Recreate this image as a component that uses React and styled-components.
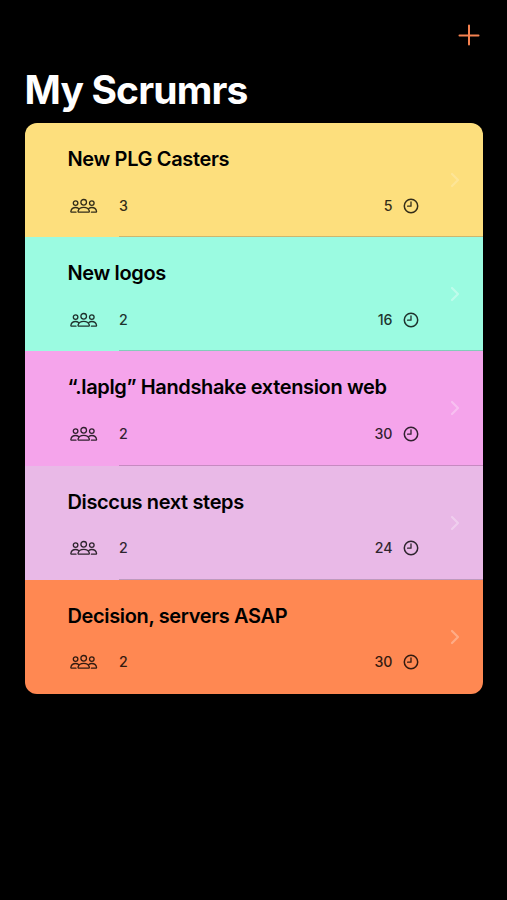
import React from 'react'
import { styled, createGlobalStyle } from 'styled-components'

const GlobalStyle = createGlobalStyle`
  * {
    box-sizing: border-box;
  }
  body {
    margin: 0;
    background-color: #000;
    font-family: Inter, 'Liberation Sans', sans-serif;
  }
`

const Screen = styled.div`
  width: 507px;
  height: 900px;
  padding: 24px 24px 0 24.5px;
  background-color: #000;
  overflow: hidden;
`

const Toolbar = styled.header`
  display: flex;
  justify-content: flex-end;
  height: 42px;
  padding-right: 3px;
`

const AddButton = styled.button`
  all: unset;
  width: 22px;
  height: 22px;
  cursor: pointer;
  svg {
    display: block;
  }
`

const Heading = styled.h1`
  margin: 0;
  height: 57px;
  line-height: 48px;
  color: #fff;
  font-size: 39px;
  font-weight: 700;
  letter-spacing: -0.85px;
  white-space: nowrap;
`

const List = styled.ul`
  margin: 0;
  padding: 0;
  list-style: none;
  border-radius: 12px;
  overflow: hidden;
`

const Row = styled.li`
  display: flex;
  align-items: center;
  height: 114.2px;
  padding: 0 23px 0 43px;
  background-color: ${({ $color }) => $color};
  background-image: ${({ $last }) => $last ? 'none' : 'linear-gradient(rgba(60, 60, 67, 0.25), rgba(60, 60, 67, 0.25))'};
  background-size: calc(100% - 94px) 1px;
  background-position: right bottom;
  background-repeat: no-repeat;
`

const Content = styled.div`
  width: 351px;
  height: 100%;
  padding-top: 23px;
`

const Title = styled.h2`
  margin: 0;
  height: 46.5px;
  line-height: 26px;
  color: #000;
  font-size: 20px;
  font-weight: 600;
  letter-spacing: -0.36px;
  white-space: nowrap;
`

const Meta = styled.div`
  display: flex;
  align-items: center;
  justify-content: space-between;
  height: 26px;
  padding-left: 2px;
  color: #000;
  opacity: 0.8;
  font-size: 14.2px;
  font-weight: 500;
  line-height: 18px;
`

const Attendees = styled.div`
  display: flex;
  align-items: center;
  gap: 21.5px;
`

const Duration = styled.div`
  display: flex;
  align-items: center;
  gap: 10px;
`

const Arrow = styled.svg`
  display: block;
  margin-left: auto;
  opacity: ${({ $opacity }) => $opacity};
`

const scrums = [
  { title: 'New PLG Casters', people: 3, minutes: 5, color: '#fddf7d', arrow: 0.2 },
  { title: 'New logos', people: 2, minutes: 16, color: '#9bfbe1', arrow: 0.35 },
  { title: '“.laplg” Handshake extension web', people: 2, minutes: 30, color: '#f5a4eb', arrow: 0.3 },
  { title: 'Disccus next steps', people: 2, minutes: 24, color: '#e9b9e7', arrow: 0.3 },
  { title: 'Decision, servers ASAP', people: 2, minutes: 30, color: '#ff8852', arrow: 0.3 },
]

const PlusIcon = () => (
  <svg width="22" height="22" viewBox="0 0 22 22" fill="none" stroke="#f58250" strokeWidth="2" strokeLinecap="round">
    <path d="M11 1.5v19M1.5 11.5h19" />
  </svg>
)

const PeopleIcon = () => (
  <svg width="28" height="16" viewBox="0 0 28 16" fill="none" stroke="currentColor" strokeWidth="1.3" strokeLinecap="round" strokeLinejoin="round">
    <circle cx="13.7" cy="4.3" r="2.8" />
    <circle cx="5.6" cy="5.1" r="2.3" />
    <circle cx="21.8" cy="5.1" r="2.3" />
    <path d="M9 14.2h9.4c.8 0 1.1-.5.9-1.2-.6-2.1-2.8-3.6-5.6-3.6s-5 1.5-5.6 3.6c-.2.7.1 1.2.9 1.2z" />
    <path d="M6 14.2H1.700c-.7 0-1-.5-.8-1.2.5-2.1 2.3-3.500 4.700-3.500 1.200 0 2.200.4 3 1" />
    <path d="M21.4 14.200h4.300c.7 0 1-.5.8-1.200-.5-2.100-2.300-3.500-4.700-3.500-1.200 0-2.200.4-3 1" />
  </svg>
)

const ClockIcon = () => (
  <svg width="16" height="16" viewBox="0 0 16 16" fill="none" stroke="currentColor" strokeWidth="1.5" strokeLinecap="round" strokeLinejoin="round">
    <circle cx="8" cy="8" r="6.7" />
    <path d="M8 4v4.2H4.6" strokeWidth="1.3" />
  </svg>
)

const Chevron = ({ opacity }) => (
  <Arrow $opacity={opacity} width="10" height="16" viewBox="0 0 10 16" fill="none" stroke="#fff" strokeWidth="2.2" strokeLinecap="round" strokeLinejoin="round">
    <path d="M2 2l6 6-6 6" />
  </Arrow>
)

export default function App() {
  return <>
    <GlobalStyle />
    <Screen>
      <Toolbar>
        <AddButton aria-label="Add"><PlusIcon /></AddButton>
      </Toolbar>
      <Heading>My Scrumrs</Heading>
      <List>
        {scrums.map((scrum, i) => (
          <Row key={scrum.title} $color={scrum.color} $last={i === scrums.length - 1}>
            <Content>
              <Title>{scrum.title}</Title>
              <Meta>
                <Attendees><PeopleIcon /><span>{scrum.people}</span></Attendees>
                <Duration><span>{scrum.minutes}</span><ClockIcon /></Duration>
              </Meta>
            </Content>
            <Chevron opacity={scrum.arrow} />
          </Row>
        ))}
      </List>
    </Screen>
  </>
}
